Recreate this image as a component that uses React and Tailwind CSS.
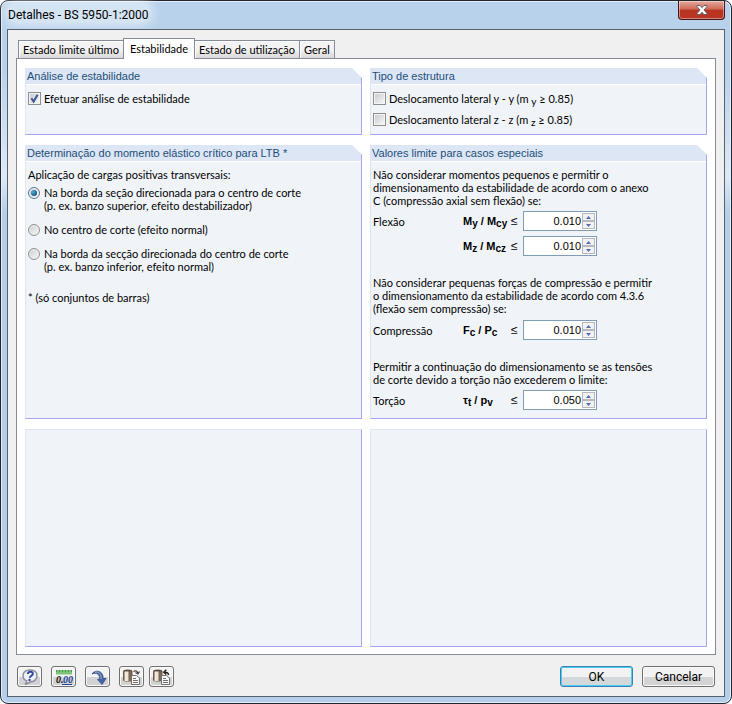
import { useState } from 'react';

const TABS = ['Estado limite último', 'Estabilidade', 'Estado de utilização', 'Geral'];

function Panel({ title, children }) {
  if (!title) {
    return <section className="border border-t-[#dce6f4] border-r-[#a6a6ec] border-b-[#a6a6ec] border-l-[#dce6f4] bg-[#f0f4f9]" />;
  }

  return (
    <section className="flex flex-col border-r border-b border-l border-r-[#a6a6ec] border-b-[#a6a6ec] border-l-[#dce6f4] bg-[#f0f4f9] [clip-path:polygon(0_0,calc(100%-10px)_0,100%_10px,100%_100%,0_100%)]">
      <h2 className="h-[17px] border-b border-white bg-[#dce6f4] px-px font-['Liberation_Sans',Arial,sans-serif] leading-4 text-[#1f4e79]">{title}</h2>
      <div className="px-[2px] pt-[6px] pb-2">{children}</div>
    </section>
  );
}

function CheckBox({ label, checked, onChange }) {
  return (
    <label className="flex h-[13px] items-start gap-[3px]">
      <span className="relative flex size-[13px] shrink-0">
        <input
          type="checkbox"
          checked={checked}
          onChange={onChange}
          className="size-[13px] appearance-none border border-[#8e8f8f] bg-linear-to-br from-[#c4c9ce] to-[#fafafa] shadow-[inset_0_0_0_1px_#f4f4f4]"
        />
        {checked && (
          <svg viewBox="0 0 13 13" className="pointer-events-none absolute inset-0 size-[13px]">
            <path d="M3.4 6.2 5.6 9.6 9.6 2.8" fill="none" stroke="#3f5597" strokeWidth="2" />
          </svg>
        )}
      </span>
      <span>{label}</span>
    </label>
  );
}

function Radio({ value, selected, onSelect, children }) {
  return (
    <label className="flex items-start gap-1">
      <span className="relative mt-px flex size-3 shrink-0">
        <input
          type="radio"
          name="load"
          value={value}
          checked={selected === value}
          onChange={() => onSelect(value)}
          className="size-3 appearance-none rounded-full border border-[#8e8f8f] bg-linear-to-br from-[#c9cdd1] to-[#f8f8f8] shadow-[inset_0_0_0_1px_#f2f2f2] checked:border-[#55758f]"
        />
        {selected === value && (
          <span className="pointer-events-none absolute inset-[3px] rounded-full bg-radial-[at_35%_35%] from-[#4db4e0] to-[#082c50]" />
        )}
      </span>
      <span>{children}</span>
    </label>
  );
}

function LimitRow({ name, symbol, label, initial }) {
  const [value, setValue] = useState(initial);
  const step = (delta) => setValue((v) => Math.max(0, Number(v) + delta).toFixed(3));

  return (
    <div className="flex h-5 items-center">
      <span className="w-[90px]">{name}</span>
      <span className="w-[48px] font-['Liberation_Sans',Arial,sans-serif] font-bold whitespace-nowrap">{symbol}</span>
      <span className="w-3 font-['Liberation_Sans',Arial,sans-serif] text-xs">≤</span>
      <div className="flex h-5 w-[74px] border border-[#7f9db9] bg-white p-px">
        <input
          type="text"
          aria-label={label}
          value={value}
          onChange={(e) => setValue(e.target.value)}
          className="w-full min-w-0 pr-px text-right font-['Liberation_Sans',Arial,sans-serif] text-[11px] outline-none"
        />
        <div className="flex w-[13px] shrink-0 flex-col">
          <button type="button" aria-label={`${label} +`} onClick={() => step(0.005)} className="flex flex-1 items-center justify-center border border-[#b8b8be] bg-[#f1f1f1]">
            <svg viewBox="0 0 5 3" className="h-[3px] w-[5px]"><path d="M0 3 2.5 0 5 3Z" fill="#5468b4" /></svg>
          </button>
          <button type="button" aria-label={`${label} -`} onClick={() => step(-0.005)} className="flex flex-1 items-center justify-center border border-[#b8b8be] bg-[#f1f1f1]">
            <svg viewBox="0 0 5 3" className="h-[3px] w-[5px]"><path d="M0 0 2.5 3 5 0Z" fill="#5468b4" /></svg>
          </button>
        </div>
      </div>
    </div>
  );
}

const Sub = ({ children }) => <span className="relative top-[2px] text-[10px] leading-none">{children}</span>;

function ToolButton({ label, children }) {
  return (
    <button
      type="button"
      aria-label={label}
      className="flex h-[21px] w-[25px] items-center justify-center rounded-[3px] border border-[#707070] bg-linear-to-b from-[#f3f3f3] from-50% to-[#d2d2d2] to-50% shadow-[inset_0_0_0_1px_#fafafa]"
    >
      <svg viewBox="0 0 18 16" className="h-4 w-[18px] shrink-0" fill="none">{children}</svg>
    </button>
  );
}

function Database() {
  return (
    <>
      <path d="M0 2.500C0 .5 9.500.5 9.500 2.500V11c0 2-9.500 2-9.500 0Z" fill="#6b5a4e" />
      <path d="M1.500 2.500h4V12h-4Z" fill="#f0e6d8" />
      <path d="M7 2.500V12" stroke="#8d7866" />
      <path d="M.5 2C1.500.8 8 .8 9 2" stroke="#4a4039" />
    </>
  );
}

function Sheet() {
  return (
    <>
      <path d="M8.500 6.500h5l3 2.500v6.500h-8Z" fill="#f7f7f7" stroke="#707070" />
      <path d="M10 9.500h3M10 11.500h5M10 13.500h5" stroke="#707070" />
    </>
  );
}

export default function App() {
  const [tab, setTab] = useState('Estabilidade');
  const [analysis, setAnalysis] = useState(true);
  const [swayY, setSwayY] = useState(false);
  const [swayZ, setSwayZ] = useState(false);
  const [load, setLoad] = useState('top');

  return (
    <div className="bg-white">
      <div className="flex min-h-screen flex-col rounded-lg border border-[#22262c] bg-linear-to-b from-[#b9d2ec] from-10% via-[#dfe9f5] via-25% to-[#b5cfea] to-30% px-[6px] pb-[6px] font-[Lato,Arial,sans-serif] text-[11px] leading-[13px] text-black shadow-[inset_0_0_0_1px_#e3eefa]">
        {/* Title bar */}
        <header className="flex h-7 items-start justify-between">
          <h1 className="rounded-full bg-white/40 px-px pt-[6px] font-[Roboto,sans-serif] text-xs leading-4 shadow-[0_0_8px_4px_rgb(255_255_255/0.4)]">
            Detalhes - BS 5950-1:2000
          </h1>
          <button
            type="button"
            aria-label="Fechar"
            className="flex h-[19px] w-[47px] items-center justify-center rounded-b-[4px] border border-t-0 border-[#43191b] bg-linear-to-b from-[#e4a99d] via-[#cf6a58] via-45% to-[#b93523] to-50% shadow-[inset_0_0_0_1px_rgb(255_255_255/0.4)]"
          >
            <svg viewBox="0 0 12 10" className="h-[10px] w-3">
              <path d="M1 .5h3l2 2.200L8 .5h3v1L8 5l3 3.500v1H8L6 7.300 4 9.500H1v-1L4 5 1 1.500Z" fill="#fff" stroke="#535666" strokeWidth=".9" />
            </svg>
          </button>
        </header>

        <main className="flex flex-1 flex-col border border-[#52636f] bg-[#f0f0f0] px-2 pt-2">
          {/* Tabs */}
          <div role="tablist" className="flex items-end px-[2px]">
            {TABS.map((name) => (
              <button
                key={name}
                type="button"
                role="tab"
                aria-selected={tab === name}
                onClick={() => setTab(name)}
                className={
                  tab === name
                    ? 'relative -mb-px -ml-px h-[21px] border border-b-0 border-[#868b99] bg-white px-[6px] pb-[2px]'
                    : '-ml-px h-[18px] border border-b-0 border-[#868b99] bg-linear-to-b from-[#f3f3f3] from-50% to-[#d8d8d8] px-1 shadow-[inset_1px_1px_0_#fcfcfc] first:ml-0'
                }
              >
                {name}
              </button>
            ))}
          </div>

          <div role="tabpanel" aria-label={tab} className="grid flex-1 grid-cols-2 grid-rows-[auto_auto_1fr] gap-x-2 gap-y-[10px] border border-[#868b99] bg-white px-2 pt-[9px] pb-[7px]">
            <Panel title="Análise de estabilidade">
              <div className="pt-px">
                <CheckBox label="Efetuar análise de estabilidade" checked={analysis} onChange={() => setAnalysis(!analysis)} />
              </div>
            </Panel>

            <Panel title="Tipo de estrutura">
              <div className="flex flex-col gap-2 pt-px">
                <CheckBox label={<>Deslocamento lateral y - y (m <Sub>y</Sub> ≥ 0.85)</>} checked={swayY} onChange={() => setSwayY(!swayY)} />
                <CheckBox label={<>Deslocamento lateral z - z (m <Sub>z</Sub> ≥ 0.85)</>} checked={swayZ} onChange={() => setSwayZ(!swayZ)} />
              </div>
            </Panel>

            <Panel title="Determinação do momento elástico crítico para LTB *">
              <fieldset>
                <legend className="mb-[5px]">Aplicação de cargas positivas transversais:</legend>
                <div className="flex flex-col gap-[11px]">
                  <Radio value="top" selected={load} onSelect={setLoad}>
                    Na borda da seção direcionada para o centro de corte<br />
                    (p. ex. banzo superior, efeito destabilizador)
                  </Radio>
                  <Radio value="center" selected={load} onSelect={setLoad}>No centro de corte (efeito normal)</Radio>
                  <Radio value="bottom" selected={load} onSelect={setLoad}>
                    Na borda da secção direcionada do centro de corte<br />
                    (p. ex. banzo inferior, efeito normal)
                  </Radio>
                </div>
              </fieldset>
              <p className="mt-[18px]">* (só conjuntos de barras)</p>
            </Panel>

            <Panel title="Valores limite para casos especiais">
              <div className="flex flex-col gap-5">
                <div className="flex flex-col gap-1">
                  <p>
                    Não considerar momentos pequenos e permitir o<br />
                    dimensionamento da estabilidade de acordo com o anexo<br />
                    C (compressão axial sem flexão) se:
                  </p>
                  <div className="flex flex-col gap-[5px]">
                    <LimitRow name="Flexão" label="My / Mcy" symbol={<>M<Sub>y</Sub> / M<Sub>cy</Sub></>} initial="0.010" />
                    <LimitRow label="Mz / Mcz" symbol={<>M<Sub>z</Sub> / M<Sub>cz</Sub></>} initial="0.010" />
                  </div>
                </div>
                <div className="flex flex-col gap-[5px]">
                  <p>
                    Não considerar pequenas forças de compressão e permitir<br />
                    o dimensionamento da estabilidade de acordo com 4.3.6<br />
                    (flexão sem compressão) se:
                  </p>
                  <LimitRow name="Compressão" label="Fc / Pc" symbol={<>F<Sub>c</Sub> / P<Sub>c</Sub></>} initial="0.010" />
                </div>
                <div className="flex flex-col gap-1">
                  <p>
                    Permitir a continuação do dimensionamento se as tensões<br />
                    de corte devido a torção não excederem o limite:
                  </p>
                  <LimitRow name="Torção" label="τt / pv" symbol={<>τ<Sub>t</Sub> / p<Sub>v</Sub></>} initial="0.050" />
                </div>
              </div>
            </Panel>

            <Panel />
            <Panel />
          </div>

          {/* Buttons */}
          <footer className="flex items-center justify-between pt-[11px] pr-px pb-[9px]">
            <div className="flex gap-[9px] pl-px">
              <ToolButton label="Ajuda">
                <path d="M9 1c4.500 0 7 2.400 7 5.800S13 12.800 9.500 12.800L4.500 15.500l1.200-3.600C3.500 11 2 9.200 2 6.800 2 3.400 4.500 1 9 1Z" fill="#eef0f5" stroke="#8a8f99" strokeWidth="1.500" />
                <path d="M6.800 5c.2-1.600 1.300-2.200 2.700-2.200s2.500.7 2.300 2.200C11.600 6.800 9 6.700 8.800 8.800" stroke="#2f479a" strokeWidth="1.900" />
                <circle cx="8.500" cy="10.900" r="1.200" fill="#2f479a" />
              </ToolButton>
              <ToolButton label="Unidades e casas decimais">
                <path d="M1 1h16v4.500H1Z" fill="#7cc576" />
                <path d="M1.500 1v2M4.500 1v2M7.500 1v2M10.500 1v2M13.500 1v2M16.500 1v2" stroke="#4c9650" />
                <text x="1" y="14" fontSize="10" fontWeight="bold" fontStyle="italic" fontFamily="Liberation Serif, serif" fill="#111">0.</text>
                <text x="8" y="14" fontSize="10" fontWeight="bold" fontStyle="italic" fontFamily="Liberation Serif, serif" fill="#25449c">00</text>
                <path d="M7 15.500h10" stroke="#25449c" />
              </ToolButton>
              <ToolButton label="Padrão">
                <path d="M3 5C5.500.5 14.500 1 14.200 9.500H17L13 15.500 8.500 10.500l2.200-.5C11 5.500 7.500 3 3 5Z" fill="#4566a8" stroke="#2c4172" strokeWidth=".7" />
                <path d="M6 3.300c4-1.200 6.300 2 6.200 6.700" stroke="#a9bde2" strokeWidth=".9" />
              </ToolButton>
              <div className="flex gap-[5px]">
                <ToolButton label="Carregar padrão">
                  <Database />
                  <path d="M10.500 2.500c2-1.500 4-.5 4.500 2M12.500 3.500 15 5l1.500-2.500" stroke="#444" strokeWidth="1.200" />
                  <Sheet />
                </ToolButton>
                <ToolButton label="Salvar padrão">
                  <Database />
                  <path d="M15.500 6c0-2.200-2-3-4.500-2.700M13.300.8 10.800 3.300 13.300 5.500" stroke="#222" strokeWidth="1.500" />
                  <Sheet />
                </ToolButton>
              </div>
            </div>
            <div className="flex gap-[9px] font-[Roboto,sans-serif]">
              <button type="button" className="h-[21px] w-[73px] rounded-[3px] border border-[#3c7fb1] bg-linear-to-b from-[#f2f2f2] from-50% to-[#d4d8da] to-50% text-xs leading-4 shadow-[inset_0_0_0_1px_#48d0f4]">
                OK
              </button>
              <button type="button" className="h-[21px] w-[73px] rounded-[3px] border border-[#707070] bg-linear-to-b from-[#f2f2f2] from-50% to-[#d4d4d4] to-50% text-xs leading-4 shadow-[inset_0_0_0_1px_#fafafa]">
                Cancelar
              </button>
            </div>
          </footer>
        </main>
      </div>
    </div>
  );
}
